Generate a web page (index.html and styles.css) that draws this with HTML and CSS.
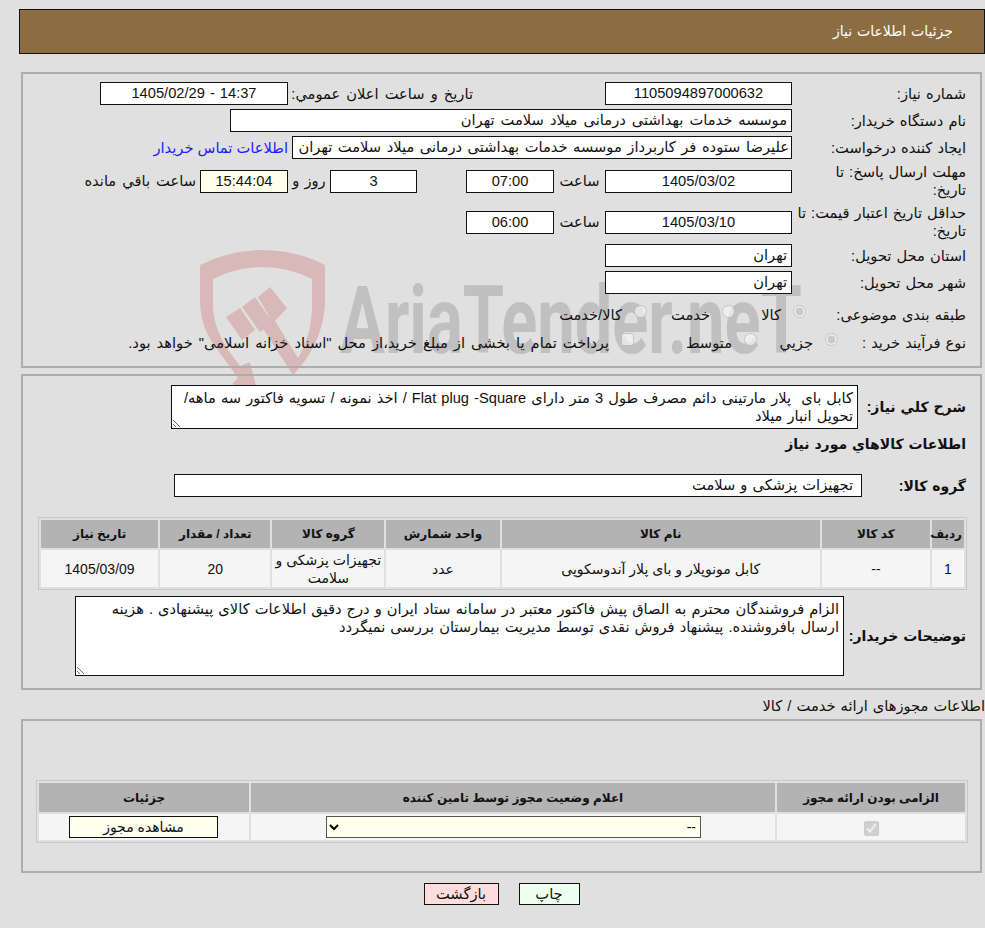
FILE: index.html
```html
<!DOCTYPE html>
<html lang="fa" dir="rtl">
<head>
<meta charset="utf-8">
<title>جزئیات اطلاعات نیاز</title>
<link rel="stylesheet" href="styles.css">
</head>
<body>
<svg class="watermark" viewBox="195 245 620 145" width="620" height="145" aria-hidden="true">
  <path class="wm-red" d="M200 265 Q231 250 262 250 Q296 250 325 265 L325 305 Q322 345 293 375 L256 318 L272 316 L298 358 Q312 335 312 305 L312 279 Q288 267 262 267 Q236 267 213 279 L213 310 Q215 330 228 350 L240 366 L250 362 L257 390 L232 384 L238 378 L214 345 Q200 325 200 300 Z"/>
  <path class="wm-red" d="M226 317 L240 308 L255 330 L242 340 Z M242 307 L255 297 L273 323 L260 332 Z M258 297 L270 287 L287 308 L273 323 Z"/>
  <text class="wm-text" x="340" y="353" textLength="462" lengthAdjust="spacingAndGlyphs" direction="ltr">AriaTender.neT</text>
</svg>

<header class="page-title">جزئیات اطلاعات نیاز</header>

<section class="panel panel-main">
  <div class="row r1">
    <div class="label">شماره نیاز:</div>
    <div class="field center w-date">1105094897000632</div>
    <div class="label label-pub">تاریخ و ساعت اعلان عمومي:</div>
    <div class="field center w-pub">14:37 - 1405/02/29</div>
  </div>
  <div class="row r2">
    <div class="label">نام دستگاه خریدار:</div>
    <div class="field w-buyer">موسسه خدمات بهداشتی درمانی میلاد سلامت تهران</div>
  </div>
  <div class="row r2">
    <div class="label">ایجاد کننده درخواست:</div>
    <div class="field w-creator">علیرضا ستوده فر کاربرداز موسسه خدمات بهداشتی درمانی میلاد سلامت تهران</div>
    <a class="contact" href="#">اطلاعات تماس خریدار</a>
  </div>
  <div class="row r4">
    <div class="label label-deadline">مهلت ارسال پاسخ: تا تاریخ:</div>
    <div class="field center w-date">1405/03/02</div>
    <div class="hour">ساعت</div>
    <div class="field center w-time">07:00</div>
    <div class="field center w-days">3</div>
    <div class="days-text">روز و</div>
    <div class="field center w-left remain">15:44:04</div>
    <div class="left-text">ساعت باقي مانده</div>
  </div>
  <div class="row r5">
    <div class="label">حداقل تاریخ اعتبار قیمت: تا تاریخ:</div>
    <div class="field center w-date">1405/03/10</div>
    <div class="hour">ساعت</div>
    <div class="field center w-time">06:00</div>
  </div>
  <div class="row r6">
    <div class="label">استان محل تحویل:</div>
    <div class="field w-date">تهران</div>
  </div>
  <div class="row r2">
    <div class="label">شهر محل تحویل:</div>
    <div class="field w-date">تهران</div>
  </div>
  <div class="row r8">
    <div class="label label-cat">طبقه بندی موضوعی:</div>
    <label class="opt opt-goods"><input type="radio" name="cat" checked disabled><span>کالا</span></label>
    <label class="opt opt-service"><input type="radio" name="cat" disabled><span>خدمت</span></label>
    <label class="opt"><input type="radio" name="cat" disabled><span>کالا/خدمت</span></label>
  </div>
  <div class="row r9">
    <div class="label label-proc">نوع فرآیند خرید :</div>
    <label class="opt opt-part"><input type="radio" name="proc" checked disabled><span>جزيي</span></label>
    <label class="opt opt-mid"><input type="radio" name="proc" disabled><span>متوسط</span></label>
    <label class="opt opt-treasury"><input type="checkbox" disabled><span>پرداخت تمام یا بخشی از مبلغ خرید،از محل "اسناد خزانه اسلامی" خواهد بود.</span></label>
  </div>
</section>

<section class="panel panel-need">
  <div class="desc-row">
    <div class="label-bold">شرح کلي نياز:</div>
    <textarea class="box desc" readonly>کابل بای  پلار مارتینی دائم مصرف طول 3 متر دارای Flat plug -Square / اخذ نمونه / تسویه فاکتور سه ماهه/ تحویل انبار میلاد</textarea>
  </div>
  <div class="label-bold goods-title">اطلاعات کالاهاي مورد نياز</div>
  <div class="group-row">
    <div class="label-bold">گروه کالا:</div>
    <div class="field w-group">تجهیزات پزشکی و سلامت</div>
  </div>
  <table class="grid goods">
    <colgroup><col class="c1"><col class="c2"><col class="c3"><col class="c4"><col class="c5"><col class="c6"><col class="c7"></colgroup>
    <thead>
      <tr><th>ردیف</th><th>کد کالا</th><th>نام کالا</th><th>واحد شمارش</th><th>گروه کالا</th><th>تعداد / مقدار</th><th>تاریخ نیاز</th></tr>
    </thead>
    <tbody>
      <tr><td>1</td><td>--</td><td>کابل مونوپلار و بای پلار آندوسکوپی</td><td>عدد</td><td>تجهیزات پزشکی و سلامت</td><td>20</td><td>1405/03/09</td></tr>
    </tbody>
  </table>
  <div class="notes-row">
    <div class="label-bold">توضیحات خریدار:</div>
    <textarea class="box notes" readonly>الزام فروشندگان محترم به الصاق پیش فاکتور معتبر در سامانه ستاد ایران و درج دقیق اطلاعات کالای پیشنهادی . هزینه ارسال بافروشنده. پیشنهاد فروش نقدی توسط مدیریت بیمارستان بررسی نمیگردد</textarea>
  </div>
</section>

<div class="license-title">اطلاعات مجوزهای ارائه خدمت / کالا</div>

<section class="panel panel-license">
  <table class="grid license">
    <colgroup><col class="l1"><col class="l2"><col class="l3"></colgroup>
    <thead>
      <tr><th>الزامی بودن ارائه مجوز</th><th>اعلام وضعیت مجوز توسط تامین کننده</th><th>جزئیات</th></tr>
    </thead>
    <tbody>
      <tr>
        <td><input class="required-box" type="checkbox" checked disabled></td>
        <td><select class="status"><option>--</option></select></td>
        <td><button class="btn view" type="button">مشاهده مجوز</button></td>
      </tr>
    </tbody>
  </table>
</section>

<div class="actions">
  <button class="btn print" type="button">چاپ</button>
  <button class="btn back" type="button">بازگشت</button>
</div>
</body>
</html>
```

FILE: styles.css
```css
html, body { margin: 0; padding: 0; }
body {
  position: relative;
  width: 985px;
  height: 928px;
  overflow: hidden;
  background: #e0e0e0;
  color: #111;
  font-family: "Liberation Sans", "DejaVu Sans", sans-serif;
  font-size: 14.67px;
  word-spacing: 1px;
  line-height: 18px;
}
.watermark { position: absolute; left: 195px; top: 245px; z-index: -1; }
.wm-red { fill: #d9b8b8; }
.wm-text { fill: #c0c0c0; font-family: "Roboto", sans-serif; font-weight: 700; font-size: 95px; word-spacing: 0; }

.page-title {
  box-sizing: border-box;
  height: 45px;
  margin: 9px 0 0 19px;
  padding: 0 31px 0 0;
  background: #8c6d42;
  border: 1px solid #111;
  color: #fff;
  font-size: 14px;
  line-height: 43px;
}
.panel { box-sizing: border-box; width: 961px; margin-right: 3px; border: 2px solid #adadad; }
.panel-main { height: 296px; margin-top: 18px; padding: 8px 14px 0 0; }
.panel-need { height: 316px; margin-top: 6px; padding: 9px 14px 0 0; }
.panel-license { height: 154px; margin-top: 4px; padding: 59px 12px 0 0; }

.row { display: flex; align-items: center; }
.r1 { height: 23px; }
.r2 { height: 23px; margin-top: 4px; }
.r4 { height: 36px; margin-top: 4px; }
.r5 { height: 36px; margin-top: 5px; }
.r6 { height: 23px; margin-top: 4px; }
.r8 { height: 22px; margin-top: 10px; }
.r9 { height: 22px; margin-top: 6px; }

.label { box-sizing: border-box; width: 174px; flex: none; padding-left: 2px; }
.label-deadline { padding-left: 30px; }
.label-pub { width: 185px; margin-right: 132px; word-spacing: 2px; }
.label-cat { width: 160px; }
.label-proc { width: 128px; }
.field {
  box-sizing: border-box;
  flex: none;
  height: 23px;
  padding: 0 4px;
  background: #fff;
  border: 1px solid #111;
  line-height: 21px;
  white-space: nowrap;
  overflow: hidden;
}
.center { text-align: center; }
.w-date { width: 187px; }
.w-pub { width: 188px; }
.w-buyer { width: 562px; word-spacing: 2px; }
.w-creator { width: 500px; padding: 0 2px; word-spacing: 1.5px; }
.w-time { width: 88px; }
.w-days { width: 87px; margin-right: 49px; }
.w-left { width: 88px; }
.w-group { width: 688px; margin-right: 39px; padding-right: 8px; }
.remain { background: #ffffee; }
.hour { width: 51px; flex: none; text-align: center; }
.days-text { width: 42px; flex: none; text-align: center; }
.left-text { margin-right: 4px; white-space: nowrap; word-spacing: 2px; }
.contact { margin-right: 4px; color: #1a1aff; text-decoration: none; white-space: nowrap; word-spacing: 0; }

.opt { display: flex; align-items: center; flex: none; white-space: nowrap; }
.opt input { flex: none; width: 13px; height: 13px; margin: 0 0 8px 12px; }
.opt-goods { width: 71px; }
.opt-service { width: 88px; }
.opt-part { width: 81px; }
.opt-mid { width: 123px; }
.opt-treasury { word-spacing: 2px; }

.label-bold { font-weight: 700; font-size: 14px; flex: none; white-space: nowrap; }
.desc-row { display: flex; align-items: center; height: 44px; }
.desc-row .label-bold { width: 103px; }
.box {
  display: block;
  box-sizing: border-box;
  margin: 0;
  padding: 3px 4px 1px;
  background: #fff;
  color: #111;
  border: 1px solid #111;
  border-radius: 0;
  font: inherit;
  word-spacing: inherit;
  outline: none;
}
.desc { width: 687px; height: 44px; margin-right: 5px; overflow: hidden; }
.goods-title { margin-top: 6px; }
.group-row { display: flex; align-items: center; margin-top: 21px; }
.group-row .label-bold { width: 65px; }

.grid { table-layout: fixed; border-collapse: separate; border-spacing: 2px; background: #e0e0e0; border: 1px solid #c8c8c8; }
.grid th { height: 28px; padding: 0 2px; background: #b3b3b3; font-size: 12px; font-weight: 700; text-align: center; word-spacing: 0; }
.grid td { height: 37px; padding: 0; background: #f5f5f5; font-size: 14px; text-align: center; word-spacing: 0; }
.goods { width: 929px; margin-top: 20px; margin-right: -1px; }
.c1 { width: 32px; } .c2 { width: 108px; } .c3 { width: 318px; } .c4 { width: 113px; }
.c5 { width: 112px; } .c6 { width: 110px; } .c7 { width: 117px; }

.notes-row { display: flex; align-items: center; margin-top: 6px; }
.notes { width: 769px; height: 80px; margin-right: 6px; overflow: hidden; }
.notes-row .label-bold { width: 116px; }

.license-title { margin-top: 7px; height: 18px; white-space: nowrap; }
.license { width: 932px; }
.license th { height: 29px; }
.license td { height: 26px; }
.l1 { width: 188px; } .l2 { width: 524px; } .l3 { width: 210px; }
.required-box { width: 15px; height: 15px; margin: 0; vertical-align: middle; }
.status {
  display: block;
  box-sizing: border-box;
  width: 375px;
  height: 22px;
  margin-right: 74px;
  background: #ffffee;
  border: 1px solid #555;
  font: inherit;
}
.btn {
  box-sizing: border-box;
  height: 22px;
  margin: 0;
  padding: 0;
  border: 1px solid #111;
  color: #111;
  font: inherit;
  word-spacing: inherit;
}
.view { display: block; width: 149px; margin-right: 31px; background: #ffffee; }
.actions { display: flex; justify-content: center; gap: 20px; margin-top: 10px; margin-right: -18px; }
.print { width: 61px; background: #efffef; }
.back { width: 75px; background: #ffdddd; }
```
